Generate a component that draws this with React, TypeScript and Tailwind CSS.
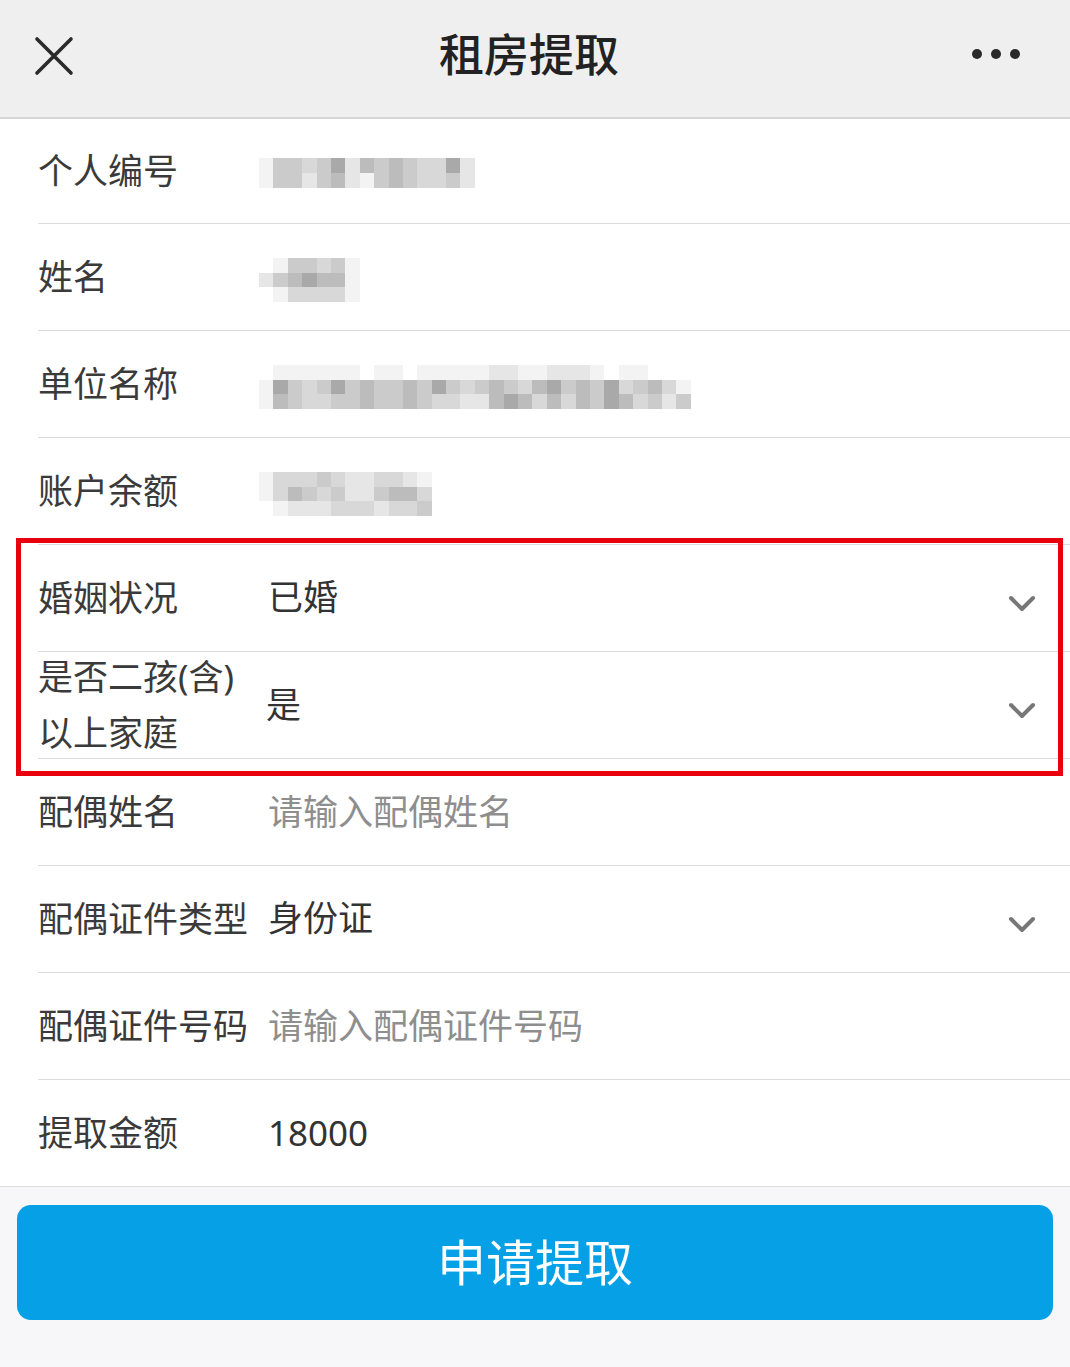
import React from "react";

const shade: Record<string, string> = {
  a: "bg-[#a9a9a9]",
  b: "bg-[#bcbcbc]",
  c: "bg-[#cbcbcb]",
  d: "bg-[#d8d8d8]",
  e: "bg-[#e6e6e6]",
  f: "bg-[#f3f3f3]",
  ".": "bg-transparent",
};

function Mosaic({ rows }: { rows: string[] }) {
  return (
    <div className="flex flex-col">
      {rows.map((r, i) => (
        <div key={i} className="flex">
          {r.split("").map((c, j) => (
            <div key={j} className={`w-[14.4px] h-[14.6px] ${shade[c]}`} />
          ))}
        </div>
      ))}
    </div>
  );
}

function Chevron() {
  return (
    <svg width="28" height="18" viewBox="0 0 28 18" className="mt-[12px]">
      <path d="M3 3 L14 14 L25 3" fill="none" stroke="#777777" strokeWidth="4" strokeLinecap="round" strokeLinejoin="round" />
    </svg>
  );
}

type RowProps = {
  label: React.ReactNode;
  children?: React.ReactNode;
  chevron?: boolean;
  full?: boolean;
  first?: boolean;
};

function Row({ label, children, chevron, full, first }: RowProps) {
  return (
    <div
      className={`${full ? "" : "ml-[38px]"} ${first ? "h-[105px]" : "h-[107px]"} border-b border-[#dcdcdc] flex items-center`}
    >
      <div
        className={`${full ? "pl-[38px] w-[268px]" : "w-[230px]"} shrink-0 text-[35px] leading-[56px] text-[#3a3a3a]`}
      >
        {label}
      </div>
      <div className="flex-1 flex items-center text-[35px] leading-[56px]">{children}</div>
      {chevron && (
        <div className="pr-[34px] flex items-center">
          <Chevron />
        </div>
      )}
    </div>
  );
}

export default function App() {
  return (
    <div
      className="relative w-[1070px] min-h-[1367px] bg-[#f7f7f9]"
      style={{ fontFamily: '"Noto Sans", "Noto Sans CJK SC", sans-serif' }}
    >
      {/* header */}
      <div className="h-[119px] bg-[#efefef] border-b-2 border-[#d6d6d6] flex items-center px-[33px]">
        <div className="flex-1 flex items-center">
          <svg width="42" height="42" viewBox="0 0 42 42" className="mt-[-6px]">
            <path d="M4 4 L38 38 M38 4 L4 38" stroke="#2a2a2a" strokeWidth="3.6" strokeLinecap="round" />
          </svg>
        </div>
        <div className="text-[45px] font-medium text-[#222222] mt-[-8px] mr-[12px]">租房提取</div>
        <div className="flex-1 flex justify-end">
          <div className="flex gap-[9px] items-center mt-[-10px] pr-[17px]">
            <div className="w-[10px] h-[10px] rounded-full bg-[#2a2a2a]" />
            <div className="w-[10px] h-[10px] rounded-full bg-[#2a2a2a]" />
            <div className="w-[10px] h-[10px] rounded-full bg-[#2a2a2a]" />
          </div>
        </div>
      </div>

      {/* form */}
      <div className="bg-white">
        <Row label="个人编号" first>
          <div className="-ml-[9px] mt-[4px]">
            <Mosaic rows={["fccdcaebcbcddae", "fccecbefcbcddce"]} />
          </div>
        </Row>
        <Row label="姓名">
          <div className="-ml-[9px] mt-[6px]">
            <Mosaic rows={[".fccdcf", "ecbabbf", ".fddddf"]} />
          </div>
        </Row>
        <Row label="单位名称">
          <div className="-ml-[9px] mt-[6px]">
            <Mosaic
              rows={[
                ".ffffff.ff.fffffeeffeeef.ff...",
                "facdcacbccbcacdcbcdbacbcadcbdf",
                "fbcddccbccbcddeebabdbdbcabdcec",
              ]}
            />
          </div>
        </Row>
        <Row label="账户余额">
          <div className="-ml-[9px] mt-[6px]">
            <Mosaic rows={["fdddcdeeddef", "fdbcdceecbbd", ".feeedddeddc"]} />
          </div>
        </Row>
        <Row label="婚姻状况" chevron>
          <span className="text-[#333333] -mt-[2px]">已婚</span>
        </Row>
        <Row
          label={
            <div className="leading-[56px]">
              是否二孩(含)
              <br />
              以上家庭
            </div>
          }
          chevron
        >
          <span className="text-[#333333] -ml-[2px]">是</span>
        </Row>
        <Row label="配偶姓名">
          <span className="text-[#8e8e8e]">请输入配偶姓名</span>
        </Row>
        <Row label="配偶证件类型" chevron>
          <span className="text-[#333333] -mt-[2px]">身份证</span>
        </Row>
        <Row label="配偶证件号码">
          <span className="text-[#8e8e8e]">请输入配偶证件号码</span>
        </Row>
        <Row label="提取金额" full>
          <span className="text-[#333333]">18000</span>
        </Row>
      </div>

      {/* button */}
      <div className="px-[17px] pt-[18px]">
        <div className="h-[115px] rounded-[14px] bg-[#05a0e6] flex items-center justify-center">
          <span className="text-[49px] text-white">申请提取</span>
        </div>
      </div>

      {/* red highlight */}
      <div className="absolute left-[16px] top-[538px] w-[1047px] h-[238px] border-[5px] border-[#e8000f] pointer-events-none" />
    </div>
  );
}
